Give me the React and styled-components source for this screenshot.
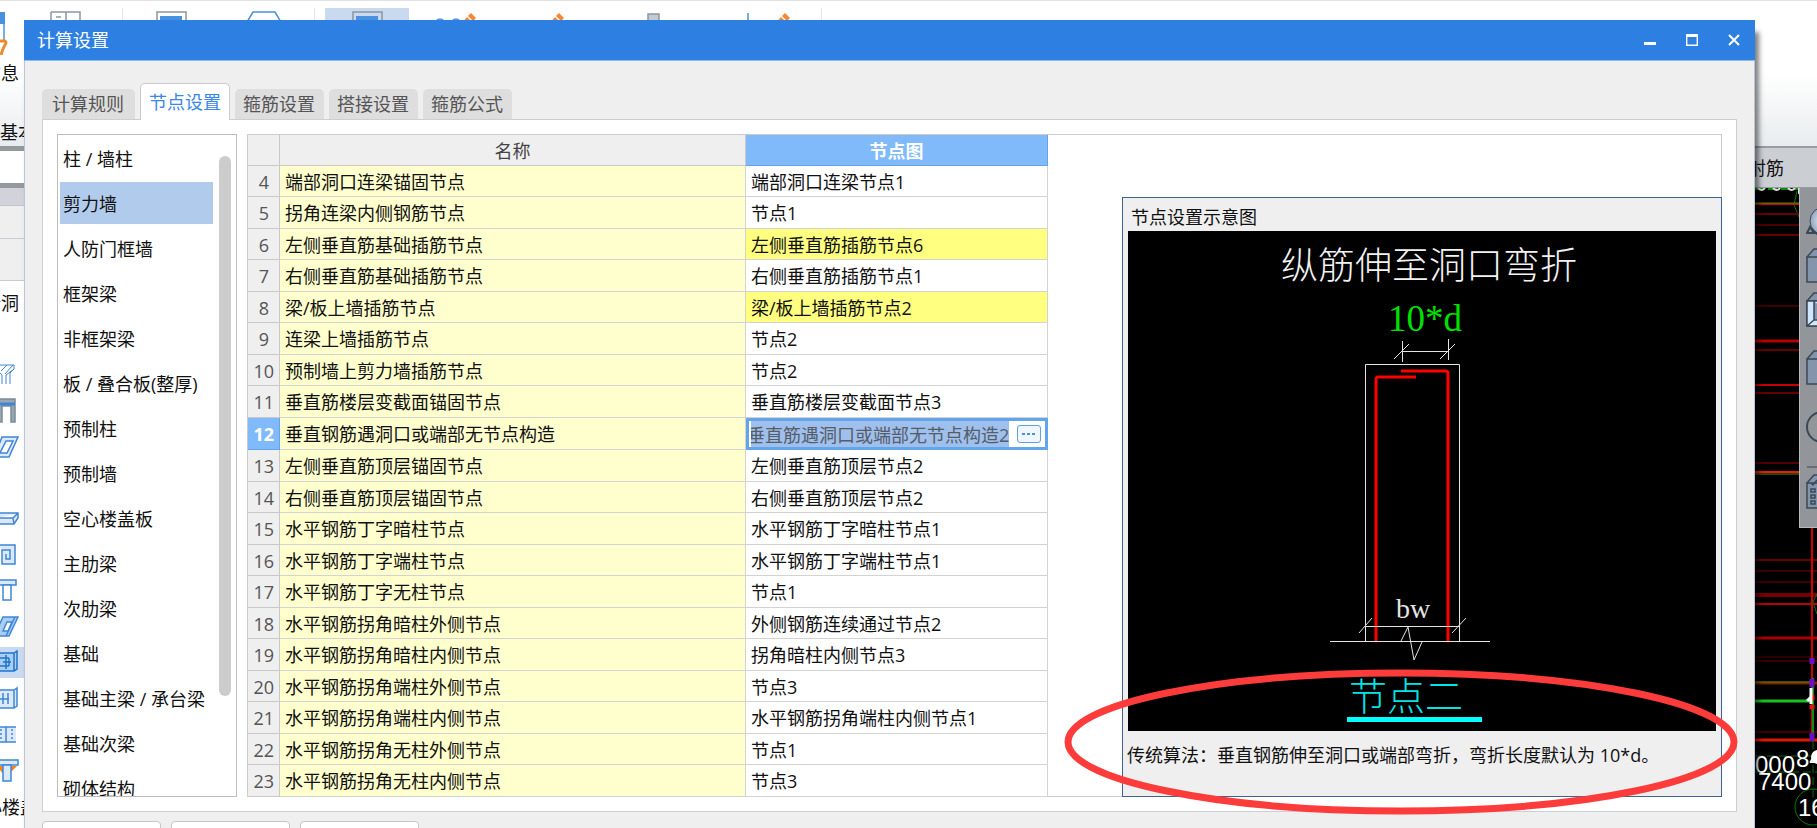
import React, { useEffect, useRef, useState } from 'react'
import styled, { createGlobalStyle, css } from 'styled-components'

const GlobalStyle = createGlobalStyle`
  * {
    box-sizing: border-box;
  }
  body {
    margin: 0;
    background: #000;
    font-family: "Open Sans", "Noto Sans CJK SC", sans-serif;
    font-size: 18px;
    line-height: 24px;
    color: #111;
  }
  button, input, table {
    font: inherit;
    color: inherit;
  }
  button {
    padding: 0;
    border: 0;
    background: none;
  }
  svg {
    display: block;
    flex: none;
  }
`

/* ---------- main window ---------- */

const Desktop = styled.div`
  position: relative;
  display: flex;
  flex-direction: column;
  height: 100vh;
  overflow: hidden;
`
const Ribbon = styled.header`
  display: flex;
  flex: none;
  height: 146px;
  border-top: 1px solid #e2e2e2;
  background: linear-gradient(#fff 50%, #e8ecee);
`
const RibbonGroup = styled.div`
  display: flex;
  flex-direction: column;
  justify-content: space-between;
  padding: 7px 0 2px;
`
const RibbonRow = styled.div`
  display: flex;
  padding-left: ${({ $inset }) => ($inset ? 10 : 0)}px;
  border-right: 1px solid #e4e6e8;
`
const RibbonButton = styled.button`
  display: flex;
  flex-direction: column;
  align-items: ${({ $cut }) => ($cut ? 'flex-end' : 'center')};
  gap: 6px;
  width: ${({ $width }) => $width}px;
  height: 82px;
  padding: ${({ $cut }) => ($cut ? '3px 5px 0 0' : '3px 0 0')};
  overflow: hidden;
  white-space: nowrap;
  background: ${({ $active }) => ($active ? '#c9d9ef' : 'transparent')};
`
const GroupTitle = styled.span`
  white-space: nowrap;
`
const Workspace = styled.div`
  display: flex;
  flex: 1;
  min-height: 0;
`
const ModuleBar = styled.aside`
  flex: none;
  width: 24px;
  overflow: hidden;
  background: #fff;
`
const FloorField = styled.div`
  height: 42px;
  border: solid #94999d;
  border-width: 5px 0;
  background: #fff;
`
const BarHead = styled.div`
  height: 18px;
  border-bottom: 1px solid #c3c5cb;
  background: #d2d3da;
`
const BarSection = styled.div`
  height: ${({ $tall }) => ($tall ? 42 : 33)}px;
  border-bottom: 1px solid #c6ccd4;
  background: #efefef;
`
const ModuleList = styled.div`
  display: flex;
  flex-direction: column;
  gap: 5px;
  padding-top: 6px;
`
const ModuleItem = styled.button`
  display: flex;
  align-items: center;
  justify-content: flex-end;
  width: ${({ $wide }) => ($wide ? 38 : 24)}px;
  height: 31px;
  padding-right: ${({ $label }) => ($label ? 5 : 0)}px;
  white-space: nowrap;
  background: ${({ $active }) => ($active ? '#c9d9ef' : 'transparent')};
`
const ModelView = styled.main`
  display: flex;
  flex-direction: column;
  flex: 1;
  min-width: 0;
`
const ModelTabs = styled.div`
  display: flex;
  justify-content: flex-end;
  align-items: center;
  flex: none;
  height: 42px;
  padding-right: 33px;
  border-top: 2px solid #989da1;
  border-bottom: 1px solid #989da1;
  background: #cbced3;
`
const ModelCanvas = styled.div`
  position: relative;
  display: flex;
  justify-content: flex-end;
  flex: 1;
  background: #000;
`
const ViewTools = styled.div`
  position: absolute;
  top: 0;
  right: 0;
  display: flex;
  flex-direction: column;
  width: 18px;
  height: 340px;
  padding: 16px 0 0 6px;
  border-left: 1px solid #b6babd;
  border-bottom: 1px solid #b6babd;
  overflow: hidden;
  background: #92969a;
`
const ViewTool = styled.button`
  display: flex;
  align-items: flex-start;
  height: ${({ $height }) => $height}px;
  overflow: hidden;
`

/* ---------- dialog ---------- */

const Dialog = styled.section`
  position: absolute;
  top: 20px;
  left: 24px;
  right: 62px;
  border: solid #b9c5d6;
  border-width: 0 1px;
  background: #efefef;
  box-shadow: 4px 12px 5px rgba(0, 0, 0, 0.5);
`
const TitleBar = styled.header`
  display: flex;
  align-items: center;
  justify-content: space-between;
  height: 41px;
  margin: 0 -1px;
  padding-left: 13px;
  border-bottom: 1px solid #8db9ef;
  background: #2d7fe1;
  color: #fff;
`
const DialogTitle = styled.h1`
  margin: 0;
  font-size: 18px;
  font-weight: 400;
`
const WindowButtons = styled.div`
  display: flex;
`
const WindowButton = styled.button`
  display: flex;
  align-items: center;
  justify-content: center;
  width: 42px;
  height: 40px;
`
const Tabs = styled.div`
  display: flex;
  align-items: flex-end;
  gap: 5px;
  height: 59px;
  margin: 0 17px -1px;
`
const Tab = styled.button`
  height: 30px;
  margin-bottom: 1px;
  padding: 0 9px 0 8px;
  border-radius: 5px 5px 0 0;
  background: #dedede;
  color: #555;

  &:first-child {
    padding: 0 11px 0 10px;
  }

  ${({ $active }) => $active && css`
    position: relative;
    height: 37px;
    margin-bottom: 0;
    padding: 0 8px;
    border: 1px solid #c9cbce;
    border-bottom: 0;
    background: #fff;
    color: #3a87e8;
  `}
`
const TabPanel = styled.div`
  display: flex;
  gap: 10px;
  margin: 0 17px;
  padding: 14px;
  border: 1px solid #cbced2;
  background: #fff;
`
const CategoryBox = styled.div`
  display: flex;
  flex: none;
  justify-content: space-between;
  width: 180px;
  height: 663px;
  padding: 2px 5px 0 2px;
  border: 1px solid #bdbdbd;
  overflow: hidden;
`
const CategoryList = styled.div`
  display: flex;
  flex-direction: column;
  gap: 3px;
  width: 153px;
`
const Category = styled.button`
  flex: none;
  height: 42px;
  padding: 2px 0 0 3px;
  text-align: left;
  white-space: nowrap;
  background: ${({ $active }) => ($active ? '#b1cbed' : 'transparent')};
`
const ScrollThumb = styled.div`
  flex: none;
  width: 12px;
  height: 540px;
  margin-top: 19px;
  border-radius: 6px;
  background: #ccc;
`
const NodeArea = styled.div`
  display: flex;
  flex: 1;
  min-width: 0;
  height: 663px;
  border: 1px solid #ccc;
`
const NodeTable = styled.table`
  flex: none;
  width: 800px;
  height: 661px;
  border-spacing: 0;
  table-layout: fixed;
`
const HeadCell = styled.th`
  width: ${({ $width }) => $width}px;
  height: 31px;
  padding: 2px 0 0;
  border: solid #c9c9c9;
  border-width: 0 1px 1px 0;
  background: #efefef;
  color: #444;
  font-weight: 400;

  ${({ $active }) => $active && css`
    border-color: #62a5ee;
    background: #80bafb;
    color: #fff;
    font-weight: 700;
  `}
`
const NodeRow = styled.tr`
  height: 31px;

  &:nth-child(even) {
    height: 32px;
  }
`
const RowNumber = styled.th`
  padding: 1px 5px 0 0;
  border: solid #c9c9c9;
  border-width: 0 1px 1px 0;
  background: #efefef;
  color: #555;
  font-weight: 400;
  text-align: right;

  ${({ $active, $short }) => css`
    padding-right: ${$short ? 10 : 5}px;
    ${$active && 'border-color: #62a5ee; background: #80bafb; color: #fff; font-weight: 700;'}
  `}
`
const Cell = styled.td`
  padding: 1px 5px 0;
  border: solid #d3d3d3;
  border-width: 0 1px 1px 0;
  white-space: nowrap;
  background: ${({ $tone }) => ({ name: '#ffffcd', changed: '#ffff80' }[$tone] || '#fff')};

  ${({ $editing }) => $editing && css`
    padding: 0;
    border: 0;
  `}
`
const Editor = styled.div`
  display: flex;
  align-items: center;
  gap: 8px;
  height: 32px;
  padding: 0 4px 0 2px;
  border: 3px solid #62a5ea;
`
const EditorInput = styled.input`
  flex: 1;
  min-width: 0;
  height: 26px;
  padding: 0;
  border: 0;
  outline: 0;
  background: #9fbfec;
  color: #555d68;
`
const MoreButton = styled.button`
  display: flex;
  align-items: center;
  justify-content: center;
  width: 24px;
  height: 18px;
  border: 1px solid #5da0e8;
  border-radius: 3px;
  background: #f0f6fd;
`
const Preview = styled.figure`
  flex: none;
  width: 600px;
  margin: 62px -1px -1px auto;
  padding: 0 5px;
  border: 1px solid #3e6293;
  background: #efefef;
`
const PreviewTitle = styled.h2`
  height: 33px;
  margin: 0;
  padding: 7px 0 0 3px;
  font-size: 18px;
  font-weight: 400;
`
const PreviewText = styled.figcaption`
  margin-left: -1px;
  padding-top: 12px;
  white-space: nowrap;
`
const Actions = styled.footer`
  display: flex;
  gap: 10px;
  padding: 9px 17px;
`
const ActionButton = styled.button`
  width: 119px;
  height: 36px;
  border: 1px solid #c4c6c9;
  border-radius: 4px;
  background: #fff;
`
const Mark = styled.svg`
  position: absolute;
  left: 1039px;
  top: 648px;
  pointer-events: none;
`

const tabs = ['计算规则', '节点设置', '箍筋设置', '搭接设置', '箍筋公式']

const categories = [
  '柱 / 墙柱', '剪力墙', '人防门框墙', '框架梁', '非框架梁', '板 / 叠合板(整厚)', '预制柱',
  '预制墙', '空心楼盖板', '主肋梁', '次肋梁', '基础', '基础主梁 / 承台梁', '基础次梁', '砌体结构',
]

const nodes = [
  { id: 4, name: '端部洞口连梁锚固节点', value: '端部洞口连梁节点1' },
  { id: 5, name: '拐角连梁内侧钢筋节点', value: '节点1' },
  { id: 6, name: '左侧垂直筋基础插筋节点', value: '左侧垂直筋插筋节点6', changed: true },
  { id: 7, name: '右侧垂直筋基础插筋节点', value: '右侧垂直筋插筋节点1' },
  { id: 8, name: '梁/板上墙插筋节点', value: '梁/板上墙插筋节点2', changed: true },
  { id: 9, name: '连梁上墙插筋节点', value: '节点2' },
  { id: 10, name: '预制墙上剪力墙插筋节点', value: '节点2' },
  { id: 11, name: '垂直筋楼层变截面锚固节点', value: '垂直筋楼层变截面节点3' },
  { id: 12, name: '垂直钢筋遇洞口或端部无节点构造', value: '垂直筋遇洞口或端部无节点构造2' },
  { id: 13, name: '左侧垂直筋顶层锚固节点', value: '左侧垂直筋顶层节点2' },
  { id: 14, name: '右侧垂直筋顶层锚固节点', value: '右侧垂直筋顶层节点2' },
  { id: 15, name: '水平钢筋丁字暗柱节点', value: '水平钢筋丁字暗柱节点1' },
  { id: 16, name: '水平钢筋丁字端柱节点', value: '水平钢筋丁字端柱节点1' },
  { id: 17, name: '水平钢筋丁字无柱节点', value: '节点1' },
  { id: 18, name: '水平钢筋拐角暗柱外侧节点', value: '外侧钢筋连续通过节点2' },
  { id: 19, name: '水平钢筋拐角暗柱内侧节点', value: '拐角暗柱内侧节点3' },
  { id: 20, name: '水平钢筋拐角端柱外侧节点', value: '节点3' },
  { id: 21, name: '水平钢筋拐角端柱内侧节点', value: '水平钢筋拐角端柱内侧节点1' },
  { id: 22, name: '水平钢筋拐角无柱外侧节点', value: '节点1' },
  { id: 23, name: '水平钢筋拐角无柱内侧节点', value: '节点3' },
]

const Pencil = ({ x }) => (
  <g transform={`translate(${x} 2)`} fill="#f58634" stroke="none">
    <path d="M7 0l5 5-3 3-5-5z" />
    <path d="M3 4l5 5-7 8-5-5z" />
  </g>
)

const RibbonIcon = ({ kind }) => (
  <svg width="48" height="44" viewBox="0 0 48 44" fill="none" stroke="#8b979e" strokeWidth="1.5">
    {kind === 'grid' && <path d="M2 1h29v9h14M2 1v30M17 1v30M2 10h29M7 6h5" />}
    {kind === 'screen' && <><path d="M10 30V1h29v29" /><path d="M13 5h22v25H13z" fill="#4a90e0" stroke="none" /></>}
    {kind === 'hexagon' && <path d="M4 11L10 1h22l6 10-6 16H10z" stroke="#4a90e0" />}
    {kind === 'circles' && <><circle cx="9" cy="13" r="5" stroke="#4a90e0" /><circle cx="25" cy="13" r="5" stroke="#4a90e0" /><Pencil x={33} /></>}
    {kind === 'pencil' && <Pencil x={27} />}
    {kind === 'column' && <path d="M18 3h11v30H18z" fill="#c3cbd0" />}
    {kind === 'line' && <><path d="M6 2v30" stroke="#4a90e0" /><Pencil x={36} /></>}
  </svg>
)

/* Icons of the module bar; its left part lies outside of the window */
const ModuleIcon = ({ kind }) => (
  <svg width="24" height="26" viewBox="0 0 24 26" fill="#dbe9fa" stroke="#3f86d6" strokeWidth="1.5">
    {kind === 'beam' && <><path d="M-4 3h18v4l-4 4v11M-4 7l6 6v9M6 22v-9l8-6" fill="none" strokeWidth="1" /><path d="M1 9l6-6M5 12l8-9" strokeWidth="1" /></>}
    {kind === 'door' && <><path d="M-2 1h17v23h-4V8H2v16h-4z" fill="#98a7b1" stroke="#7c8c96" /><path d="M-2 6h17" strokeWidth="3" /></>}
    {kind === 'slab' && <><path d="M2 3h16L9 23H-6z" /><path d="M6 7h7L7 19H0z" fill="#fff" /></>}
    {kind === 'board' && <path d="M-2 7h20v5l-4 6H-2M-2 12h15l5-5M13 12l1 6" />}
    {kind === 'spiral' && <path d="M-2 3h17v19H2V8h8v9H6v-5" />}
    {kind === 'tee' && <><path d="M-4 2h20v5H-4z" /><path d="M3 7h8v15H3z" fill="#fff" /></>}
    {kind === 'hole' && <><path d="M3 3h15L9 22H-6z" fill="#a9cdf3" /><path d="M7 8h5l-4 9H3z" fill="#fff" /><path d="M15 3L6 22" /></>}
    {kind === 'wall' && <><path d="M-2 3h16v18H-2zM14 3l3-2v18l-3 2M-2 8h11M-2 16h11M6 5v14" fill="#a9cdf3" stroke="#1f74cd" /><path d="M9 8v8M3 12h8" stroke="#1f74cd" /></>}
    {kind === 'wall2' && <><path d="M-2 4h16v18H-2zM14 4l3-2v18l-3 2" /><path d="M-2 13h11M3 7v11M8 7v11" fill="none" /></>}
    {kind === 'strip' && <><path d="M-2 5h18v15H-2z" stroke="none" /><path d="M-2 5h18M-2 20h18M6 5v15" /><path d="M1 7v12M12 7v12" strokeDasharray="2 2" /></>}
    {kind === 'cap' && <><path d="M-3 8h20l-8 8H3z" fill="#f58220" stroke="none" /><path d="M-3 2h21v5H-3z" /><path d="M3 7h8v16H3z" /></>}
  </svg>
)

const moduleItems = [
  '墙洞', null, 'beam', 'door', 'slab', null, 'board', 'spiral', 'tee', 'hole', 'wall', 'wall2', 'strip', 'cap',
]

const redLines = [
  [16, '#c01000', 2], [26, '#6a0000', 2], [37, '#900', 1], [47, '#6a0000', 2], [118, '#700', 1],
  [153, '#b80000', 3], [162, '#600', 2], [197, '#c80000', 2], [205, '#600', 2], [275, '#500', 2],
  [284, '#f01800', 2], [372, '#600', 2], [383, '#700', 1], [394, '#700', 1], [407, '#700', 4],
  [416, '#b00', 2], [450, '#a00', 3], [469, '#500', 1], [473, '#700', 1], [495, '#832000', 3],
  [544, '#400', 2], [552, '#e01800', 3],
]

const ModelDrawing = () => (
  <svg width="62" height="640" viewBox="0 0 62 640" fontFamily="Liberation Sans, sans-serif" fontSize="24" fill="#fff">
    <path d="M0 1h44" stroke="#0a8a0a" strokeWidth="2" strokeDasharray="9 4" />
    <path d="M3 0q4 4 7 0M18 0q4 4 7 0M33 0q4 4 7 0M44 0v6" stroke="#ddd" strokeWidth="2" fill="none" />
    <path d="M42 3l-3 14 5 12" stroke="#0a7a0a" fill="none" />
    {redLines.map(([y, color, size]) => (
      <path key={y} d={`M0 ${y}H62`} stroke={color} strokeWidth={size} />
    ))}
    <path d="M0 15h62M0 286h62M0 494h58" stroke="#4c8a10" strokeWidth="1" />
    <path d="M0 513h56" stroke="#17c21f" strokeWidth="3" />
    <path d="M57 340v210" stroke="#d00000" strokeWidth="2" />
    <path d="M58 490v60" stroke="#168a16" strokeWidth="2" />
    <path d="M57 470v6M57 491v8M57 545v8" stroke="#6a10c8" strokeWidth="5" />
    <path d="M57 507v5M57 517v4" stroke="#f01010" strokeWidth="5" />
    <path d="M56 500v16M52 513l4-4" stroke="#fff" strokeWidth="3" />
    <path d="M0 568h62M0 584h62M58 553v66" stroke="#0a6a0a" strokeDasharray="8 4" />
    <path d="M62 406l-4 8 4 12" stroke="#0a6a0a" fill="none" />
    <circle cx="58" cy="619" r="18" fill="none" stroke="#0a7a0a" />
    <text x="0" y="585">000</text>
    <text x="3" y="602">7400</text>
    <text x="41" y="579">84</text>
    <circle cx="63" cy="569" r="7" />
    <text x="43" y="628">16</text>
  </svg>
)

const Cube = ({ light, list }) => (
  <svg width="24" height="36" viewBox="0 0 24 36" fill="#8395ab" stroke="#3b4856" strokeWidth="1.5">
    <path d="M1 9l7-8h22v8zM1 9h26v25H1z" />
    {light && <path d="M1 9h26v25H1zM8 9v19h20M8 28l-7 6" fill="#cfe6fb" />}
    {list && <path d="M5 9l2 2 4-5M5 15h4v3H5zM5 21h4v3H5zM5 27h4v3H5z" fill="none" />}
  </svg>
)

/* Cut section of the selected node */
const NodeDrawing = () => (
  <svg width="588" height="500" viewBox="0 0 588 500" fill="none" stroke="#e4e4e4" role="img" aria-label="节点二">
    <rect width="588" height="500" fill="#000" stroke="none" />
    <g stroke="none" fontFamily="Liberation Serif, Noto Sans CJK SC, serif" fontWeight="300" fontSize="37">
      <text x="153" y="48" fill="#f2f2f2">纵筋伸至洞口弯折</text>
      <text x="260" y="100" fill="#00e000">10*d</text>
      <text x="268" y="387" fontSize="28" fill="#e4e4e4">bw</text>
      <text x="221" y="479" fontSize="38" fill="#00e6e6">节点二</text>
    </g>
    <path d="M274.5 110v21M320.5 108v21M274 120.5h46M266 128l15-15M312 128l15-15" />
    <path d="M237.5 410V133.5h94V410" />
    <path d="M273 140h45q2 0 2 3v267M288 146h-38q-2 0-2 3v261" stroke="#f00" strokeWidth="3" />
    <path d="M237 395.5h94M231 402l13-15M324 402l14-15" />
    <path d="M202 410.5h160M273 410l7-14 6 33 8-18" />
    <path d="M219 488.5h135" stroke="#0ff" strokeWidth="5" />
  </svg>
)

const NodeEditor = ({ label, value, onChange }) => {
  const input = useRef(null)

  // long values show their end
  useEffect(() => {
    input.current.scrollLeft = input.current.scrollWidth
  }, [])

  return (
    <Editor>
      <EditorInput ref={input} aria-label={label} value={value} onChange={(e) => onChange(e.target.value)} />
      <MoreButton aria-label="选择节点图">
        <svg width="16" height="4" viewBox="0 0 16 4" fill="#4a90e0">
          <rect x="1" y="1" width="3" height="2" />
          <rect x="6" y="1" width="3" height="2" />
          <rect x="11" y="1" width="3" height="2" />
        </svg>
      </MoreButton>
    </Editor>
  )
}

const MainWindow = () => (
  <>
    <Ribbon>
      <RibbonGroup>
        <RibbonRow>
          <RibbonButton $width={24} $cut>
            <svg width="48" height="44" viewBox="0 0 48 44">
              <path d="M20 1h14v12H20z" fill="#4a90e0" />
              <path d="M33 1v29" stroke="#4a90e0" strokeWidth="1.5" />
              <path d="M28 30h6q2 1 0 4t-4 10" fill="none" stroke="#f0892c" strokeWidth="3" />
            </svg>
            信息
          </RibbonButton>
          <RibbonButton $width={98} aria-label="楼层设置"><RibbonIcon kind="grid" /></RibbonButton>
        </RibbonRow>
        <GroupTitle>基本设置</GroupTitle>
      </RibbonGroup>
      <RibbonGroup>
        <RibbonRow>
          <RibbonButton $width={96} aria-label="查看"><RibbonIcon kind="screen" /></RibbonButton>
          <RibbonButton $width={95} aria-label="轮廓"><RibbonIcon kind="hexagon" /></RibbonButton>
        </RibbonRow>
      </RibbonGroup>
      <RibbonGroup>
        <RibbonRow $inset>
          <RibbonButton $width={84} $active aria-label="计算设置"><RibbonIcon kind="screen" /></RibbonButton>
          <RibbonButton $width={91} aria-label="比重设置"><RibbonIcon kind="circles" /></RibbonButton>
          <RibbonButton $width={97} aria-label="弯钩设置"><RibbonIcon kind="pencil" /></RibbonButton>
          <RibbonButton $width={113} aria-label="损耗设置"><RibbonIcon kind="column" /></RibbonButton>
          <RibbonButton $width={111} aria-label="弯曲调整"><RibbonIcon kind="line" /></RibbonButton>
        </RibbonRow>
      </RibbonGroup>
    </Ribbon>
    <Workspace>
      <ModuleBar>
        <FloorField />
        <BarHead />
        <BarSection />
        <BarSection $tall />
        <ModuleList>
          {moduleItems.map((kind, i) => {
            if (kind === '墙洞') return <ModuleItem key={i} $label>{kind}</ModuleItem>
            return (
              <ModuleItem key={i} $active={kind === 'wall'} aria-label="构件">
                {kind && <ModuleIcon kind={kind} />}
              </ModuleItem>
            )
          })}
          <ModuleItem $wide>心楼盖</ModuleItem>
        </ModuleList>
      </ModuleBar>
      <ModelView>
        <ModelTabs>射筋</ModelTabs>
        <ModelCanvas>
          <ModelDrawing />
          <ViewTools>
            <ViewTool $height={44} aria-label="动态观察">
              <svg width="30" height="36" viewBox="0 0 30 36">
                <defs>
                  <radialGradient id="ball"><stop offset="0" stopColor="#f4f8fc" /><stop offset="1" stopColor="#8fa5bd" /></radialGradient>
                </defs>
                <circle cx="18" cy="17" r="14" fill="url(#ball)" stroke="#3b4856" />
                <path d="M4 23l-3 6h7zM6 25q4 6 12 7" fill="none" stroke="#3b4856" strokeWidth="2" />
              </svg>
            </ViewTool>
            <ViewTool $height={44} aria-label="三维"><Cube /></ViewTool>
            <ViewTool $height={58} aria-label="俯视"><Cube light /></ViewTool>
            <ViewTool $height={60} aria-label="实体"><Cube /></ViewTool>
            <ViewTool $height={64} aria-label="旋转">
              <svg width="34" height="64" viewBox="0 0 34 64" fill="none" stroke="#3b4856">
                <circle cx="16" cy="17" r="15" strokeWidth="2" />
                <path d="M1 57h30" />
              </svg>
            </ViewTool>
            <ViewTool $height={36} aria-label="显示设置"><Cube list /></ViewTool>
          </ViewTools>
        </ModelCanvas>
      </ModelView>
    </Workspace>
  </>
)

const SettingsDialog = () => {
  const [value, setValue] = useState(nodes[8].value)

  return (
    <Dialog role="dialog" aria-labelledby="dialog-title">
      <TitleBar>
        <DialogTitle id="dialog-title">计算设置</DialogTitle>
        <WindowButtons>
          <WindowButton aria-label="最小化">
            <svg width="12" height="12" viewBox="0 0 12 12"><path d="M0 9.5h12" stroke="#fff" strokeWidth="3" /></svg>
          </WindowButton>
          <WindowButton aria-label="最大化">
            <svg width="12" height="12" viewBox="0 0 12 12" fill="none" stroke="#fff">
              <path d="M.7 1v10.3h10.6V1" strokeWidth="1.4" />
              <path d="M0 1.5h12" strokeWidth="3" />
            </svg>
          </WindowButton>
          <WindowButton aria-label="关闭">
            <svg width="12" height="12" viewBox="0 0 12 12"><path d="M1 1l10 10M11 1L1 11" stroke="#fff" strokeWidth="2" /></svg>
          </WindowButton>
        </WindowButtons>
      </TitleBar>
      <Tabs role="tablist">
        {tabs.map((tab, i) => (
          <Tab key={tab} role="tab" aria-selected={i === 1} $active={i === 1}>{tab}</Tab>
        ))}
      </Tabs>
      <TabPanel role="tabpanel">
        <CategoryBox>
          <CategoryList>
            {categories.map((item) => (
              <Category key={item} $active={item === '剪力墙'}>{item}</Category>
            ))}
          </CategoryList>
          <ScrollThumb />
        </CategoryBox>
        <NodeArea>
          <NodeTable>
            <thead>
              <tr>
                <HeadCell $width={32} aria-label="序号" />
                <HeadCell $width={466}>名称</HeadCell>
                <HeadCell $width={302} $active>节点图</HeadCell>
              </tr>
            </thead>
            <tbody>
              {nodes.map((node) => {
                const editing = node.id === 12
                return (
                  <NodeRow key={node.id}>
                    <RowNumber scope="row" $active={editing} $short={node.id < 10}>{node.id}</RowNumber>
                    <Cell $tone="name">{node.name}</Cell>
                    <Cell $tone={node.changed && 'changed'} $editing={editing}>
                      {editing ? <NodeEditor label={node.name} value={value} onChange={setValue} /> : node.value}
                    </Cell>
                  </NodeRow>
                )
              })}
            </tbody>
          </NodeTable>
          <Preview>
            <PreviewTitle>节点设置示意图</PreviewTitle>
            <NodeDrawing />
            <PreviewText>传统算法：垂直钢筋伸至洞口或端部弯折，弯折长度默认为 10*d。</PreviewText>
          </Preview>
        </NodeArea>
      </TabPanel>
      <Actions>
        <ActionButton aria-label="导入规则" />
        <ActionButton aria-label="导出规则" />
        <ActionButton aria-label="恢复默认值" />
      </Actions>
      <Mark width="674" height="148" viewBox="0 0 674 148" aria-hidden="true">
        <ellipse cx="337" cy="74" rx="333" ry="69" fill="none" stroke="#fc3b3b" strokeWidth="7" />
      </Mark>
    </Dialog>
  )
}

const App = () => (
  <>
    <GlobalStyle />
    <Desktop>
      <MainWindow />
      <SettingsDialog />
    </Desktop>
  </>
)

export default App
